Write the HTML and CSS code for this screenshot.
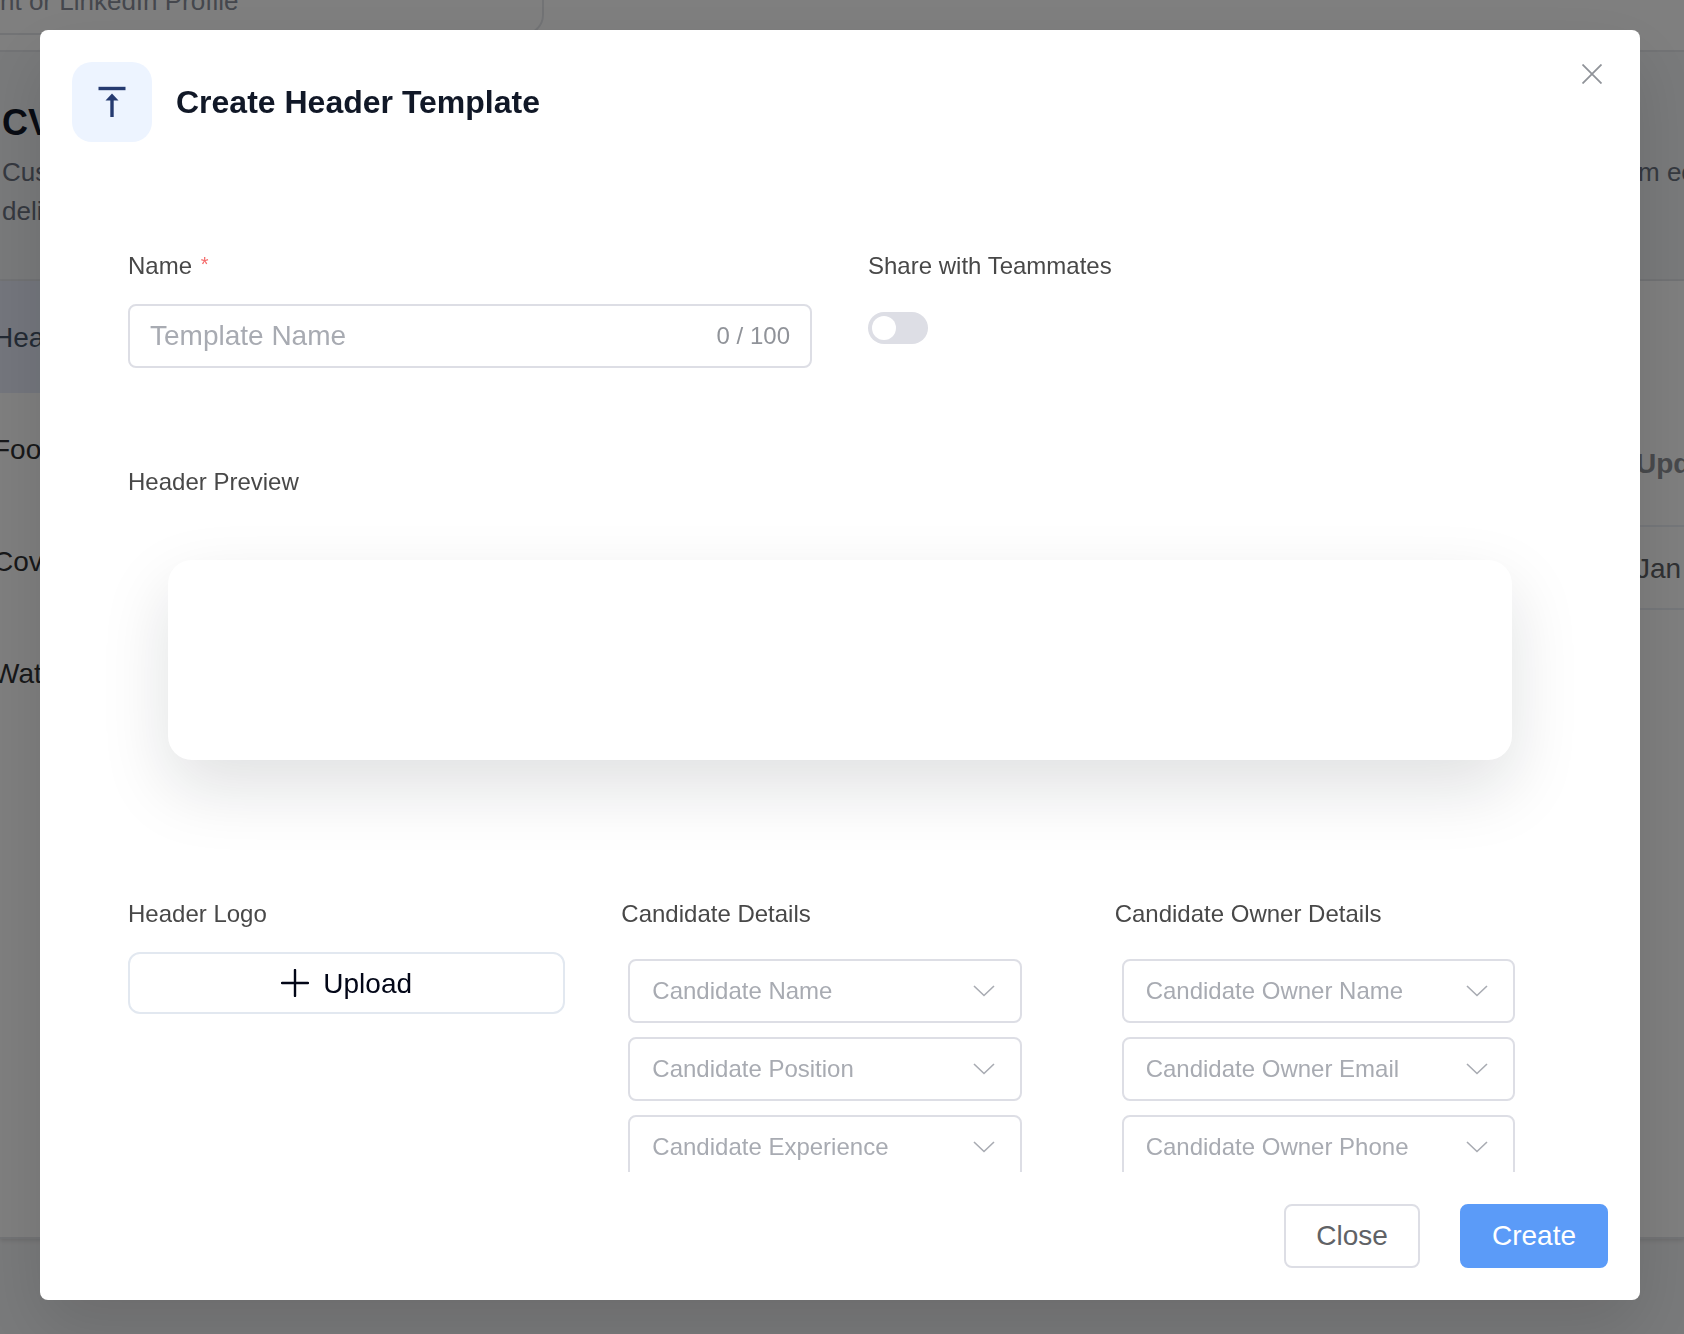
FILE: index.html
```html
<!DOCTYPE html>
<html lang="en">
<head>
  <meta charset="UTF-8" />
  <meta name="viewport" content="width=device-width, initial-scale=1" />
  <title>Create Header Template</title>
  <link rel="stylesheet" href="styles.css">
</head>
<body>

  <!-- Page behind the dialog -->
  <div class="page">
    <div class="topbar">
      <div class="search">nt or LinkedIn Profile</div>
    </div>
    <div class="page-head">
      <div>
        <h1>CV</h1>
        <p>Cus<br>deli</p>
      </div>
      <p class="page-head-right">m ec</p>
    </div>
    <div class="page-body">
      <ul class="menu">
        <li class="active">Hea</li>
        <li>Foo</li>
        <li>Cov</li>
        <li>Wat</li>
      </ul>
      <div class="list">
        <div class="list-head">Upd</div>
        <div class="list-row">Jan</div>
      </div>
    </div>
  </div>

  <!-- Dialog -->
  <div class="overlay">
    <div class="dialog">
      <div class="dialog-header">
        <div class="dialog-icon">
          <svg width="28" height="32" viewBox="0 0 28 32">
            <path d="M.5 2.500h27" stroke="#253a70" stroke-width="3.400" />
            <path d="M14 31V12" stroke="#253a70" stroke-width="3.400" />
            <path d="M14 7.500l6.500 7h-13z" fill="#253a70" />
          </svg>
        </div>
        <h2>Create Header Template</h2>
        <button class="btn-x" aria-label="Close">
          <svg width="20" height="20" viewBox="0 0 20 20">
            <path d="M.500 .500l19 19M19.500 .500l-19 19" stroke="#909399" stroke-width="1.800" />
          </svg>
        </button>
      </div>

      <div class="dialog-body">
        <div class="row two">
          <div class="field">
            <label for="name">Name <span class="required">*</span></label>
            <div class="input">
              <input type="text" id="name" placeholder="Template Name" maxlength="100" />
              <span class="count">0 / 100</span>
            </div>
          </div>
          <div class="field">
            <label>Share with Teammates</label>
            <div class="switch"></div>
          </div>
        </div>

        <div class="field preview-field">
          <label>Header Preview</label>
          <div class="preview"></div>
        </div>

        <div class="row three">
          <div class="field">
            <label>Header Logo</label>
            <button class="upload">
              <svg width="28" height="28" viewBox="0 0 28 28">
                <path d="M14 1v26M1 14h26" stroke="#020617" stroke-width="2.400" stroke-linecap="round" />
              </svg>
              <span>Upload</span>
            </button>
          </div>
          <div class="field">
            <label>Candidate Details</label>
            <div class="selects">
              <div class="select">Candidate Name
                <svg width="22" height="12" viewBox="0 0 22 12"><path d="M1 1l10 9.500L21 1" /></svg>
              </div>
              <div class="select">Candidate Position
                <svg width="22" height="12" viewBox="0 0 22 12"><path d="M1 1l10 9.500L21 1" /></svg>
              </div>
              <div class="select">Candidate Experience
                <svg width="22" height="12" viewBox="0 0 22 12"><path d="M1 1l10 9.500L21 1" /></svg>
              </div>
            </div>
          </div>
          <div class="field">
            <label>Candidate Owner Details</label>
            <div class="selects">
              <div class="select">Candidate Owner Name
                <svg width="22" height="12" viewBox="0 0 22 12"><path d="M1 1l10 9.500L21 1" /></svg>
              </div>
              <div class="select">Candidate Owner Email
                <svg width="22" height="12" viewBox="0 0 22 12"><path d="M1 1l10 9.500L21 1" /></svg>
              </div>
              <div class="select">Candidate Owner Phone
                <svg width="22" height="12" viewBox="0 0 22 12"><path d="M1 1l10 9.500L21 1" /></svg>
              </div>
            </div>
          </div>
        </div>
      </div>

      <div class="dialog-footer">
        <button class="btn">Close</button>
        <button class="btn primary">Create</button>
      </div>
    </div>
  </div>

</body>
</html>
```
FILE: styles.css
```css
* {
  box-sizing: border-box;
}

body {
  margin: 0;
  font-family: "Liberation Sans", Arial, sans-serif;
  overflow: hidden;
}

h1, h2, p, ul {
  margin: 0;
  padding: 0;
}

button, input {
  font-family: inherit;
}

/* page behind the dialog */
.page {
  height: 1334px;
  background: #f3f4f6;
  white-space: nowrap;
}

.topbar {
  height: 52px;
  background: #fff;
  border-bottom: 2px solid #e5e7eb;
}

.search {
  width: 544px;
  height: 35px;
  border: 2px solid #e5e7eb;
  border-width: 0 2px 2px 0;
  border-bottom-right-radius: 20px;
  font-size: 26px;
  line-height: 1;
  color: #8a8f9b;
  display: flex;
  align-items: flex-end;
  padding-bottom: 19px;
}

.page-head {
  display: flex;
  justify-content: space-between;
  height: 229px;
  padding: 49px 0 0 2px;
  background: #f3f4f6;
  border-bottom: 2px solid #e5e7eb;
}

.page-head h1 {
  font-size: 36px;
  line-height: 44px;
  color: #111827;
  margin-bottom: 8px;
}

.page-head p {
  font-size: 26px;
  line-height: 39px;
  color: #6b7280;
}

.page-head .page-head-right {
  width: 46px;
  padding-top: 52px;
}

.page-body {
  display: flex;
  justify-content: space-between;
  height: 958px;
  background: #fff;
  border-bottom: 2px solid #e5e7eb;
  box-shadow: 0 2px 4px rgba(0, 0, 0, 0.1);
}

.menu {
  width: 300px;
  list-style: none;
  font-size: 28px;
  color: #303133;
}

.menu li {
  height: 112px;
  line-height: 114px;
  text-indent: -7px;
}

.menu .active {
  background: #e8edfa;
  color: #475569;
}

.list {
  width: 48px;
  font-size: 28px;
}

.list-head {
  height: 246px;
  padding-top: 167px;
  font-weight: bold;
  color: #909399;
  border-bottom: 2px solid #ebeef5;
}

.list-row {
  height: 83px;
  line-height: 84px;
  color: #606266;
  border-bottom: 2px solid #ebeef5;
}

/* dialog */
.overlay {
  position: fixed;
  inset: 0;
  padding: 30px 44px 34px 40px;
  background: rgba(0, 0, 0, 0.5);
}

.dialog {
  display: flex;
  flex-direction: column;
  height: 100%;
  background: #fff;
  border-radius: 8px;
  box-shadow: 0 28px 68px rgba(0, 0, 0, 0.12);
}

.dialog-header {
  display: flex;
  align-items: center;
  padding: 32px 38px 32px 32px;
}

.dialog-icon {
  display: flex;
  align-items: center;
  justify-content: center;
  width: 80px;
  height: 80px;
  border-radius: 20px;
  background: #edf4ff;
}

.dialog-header h2 {
  margin-left: 24px;
  font-size: 32px;
  line-height: 40px;
  color: #111827;
}

.btn-x {
  display: flex;
  align-self: flex-start;
  margin: 2px 0 0 auto;
  padding: 0;
  border: none;
  background: none;
}

.dialog-body {
  flex: 1;
  min-height: 0;
  overflow: hidden;
  padding: 74px 88px 0;
}

.row {
  display: grid;
  column-gap: 56px;
}

.two {
  grid-template-columns: repeat(2, 1fr);
}

.three {
  grid-template-columns: repeat(3, 1fr);
}

.field label {
  display: block;
  margin-bottom: 20px;
  font-size: 24px;
  line-height: 36px;
  color: #484848;
}

.required {
  margin-left: 2px;
  font-size: 20px;
  vertical-align: 3px;
  line-height: 1;
  color: #f56c6c;
}

.input {
  display: flex;
  align-items: center;
  height: 64px;
  padding: 0 20px;
  border: 2px solid #dddee5;
  border-radius: 8px;
}

.input input {
  flex: 1;
  min-width: 0;
  padding: 0;
  border: none;
  outline: none;
  font-size: 28px;
}

.input input::placeholder {
  color: #a8abb2;
}

.count {
  font-size: 24px;
  color: #909399;
}

.switch {
  width: 60px;
  height: 32px;
  margin-top: 28px;
  padding: 4px;
  border-radius: 16px;
  background: #dddee5;
}

.switch::before {
  content: "";
  display: block;
  width: 24px;
  height: 24px;
  border-radius: 50%;
  background: #fff;
}

.preview-field {
  margin: 96px 0 136px;
}

.preview {
  height: 200px;
  margin: 60px 40px 0;
  border-radius: 24px;
  background: #fff;
  box-shadow: 0 28px 68px rgba(15, 20, 30, 0.13);
}

.upload {
  display: flex;
  align-items: center;
  justify-content: center;
  gap: 14px;
  width: 100%;
  height: 62px;
  border: 2px solid #e2e8f0;
  border-radius: 12px;
  background: #fff;
  font-size: 28px;
  color: #020617;
}

.upload span {
  padding-top: 2px;
}

.selects {
  display: flex;
  flex-direction: column;
  gap: 14px;
  padding: 7px 37px 0 7px;
}

.select {
  display: flex;
  align-items: center;
  justify-content: space-between;
  height: 64px;
  padding: 0 25px 0 22px;
  border: 2px solid #dddee5;
  border-radius: 8px;
  font-size: 24px;
  color: #a8abb2;
}

.select svg {
  fill: none;
  stroke: #a8abb2;
  stroke-width: 1.6;
}

.dialog-footer {
  display: flex;
  justify-content: flex-end;
  gap: 40px;
  padding: 32px;
}

.btn {
  height: 64px;
  padding: 0 30px;
  border: 2px solid #dddee5;
  border-radius: 8px;
  background: #fff;
  font-size: 28px;
  color: #606266;
}

.primary {
  border-color: #5b9bf8;
  background: #5b9bf8;
  color: #fff;
}
```
